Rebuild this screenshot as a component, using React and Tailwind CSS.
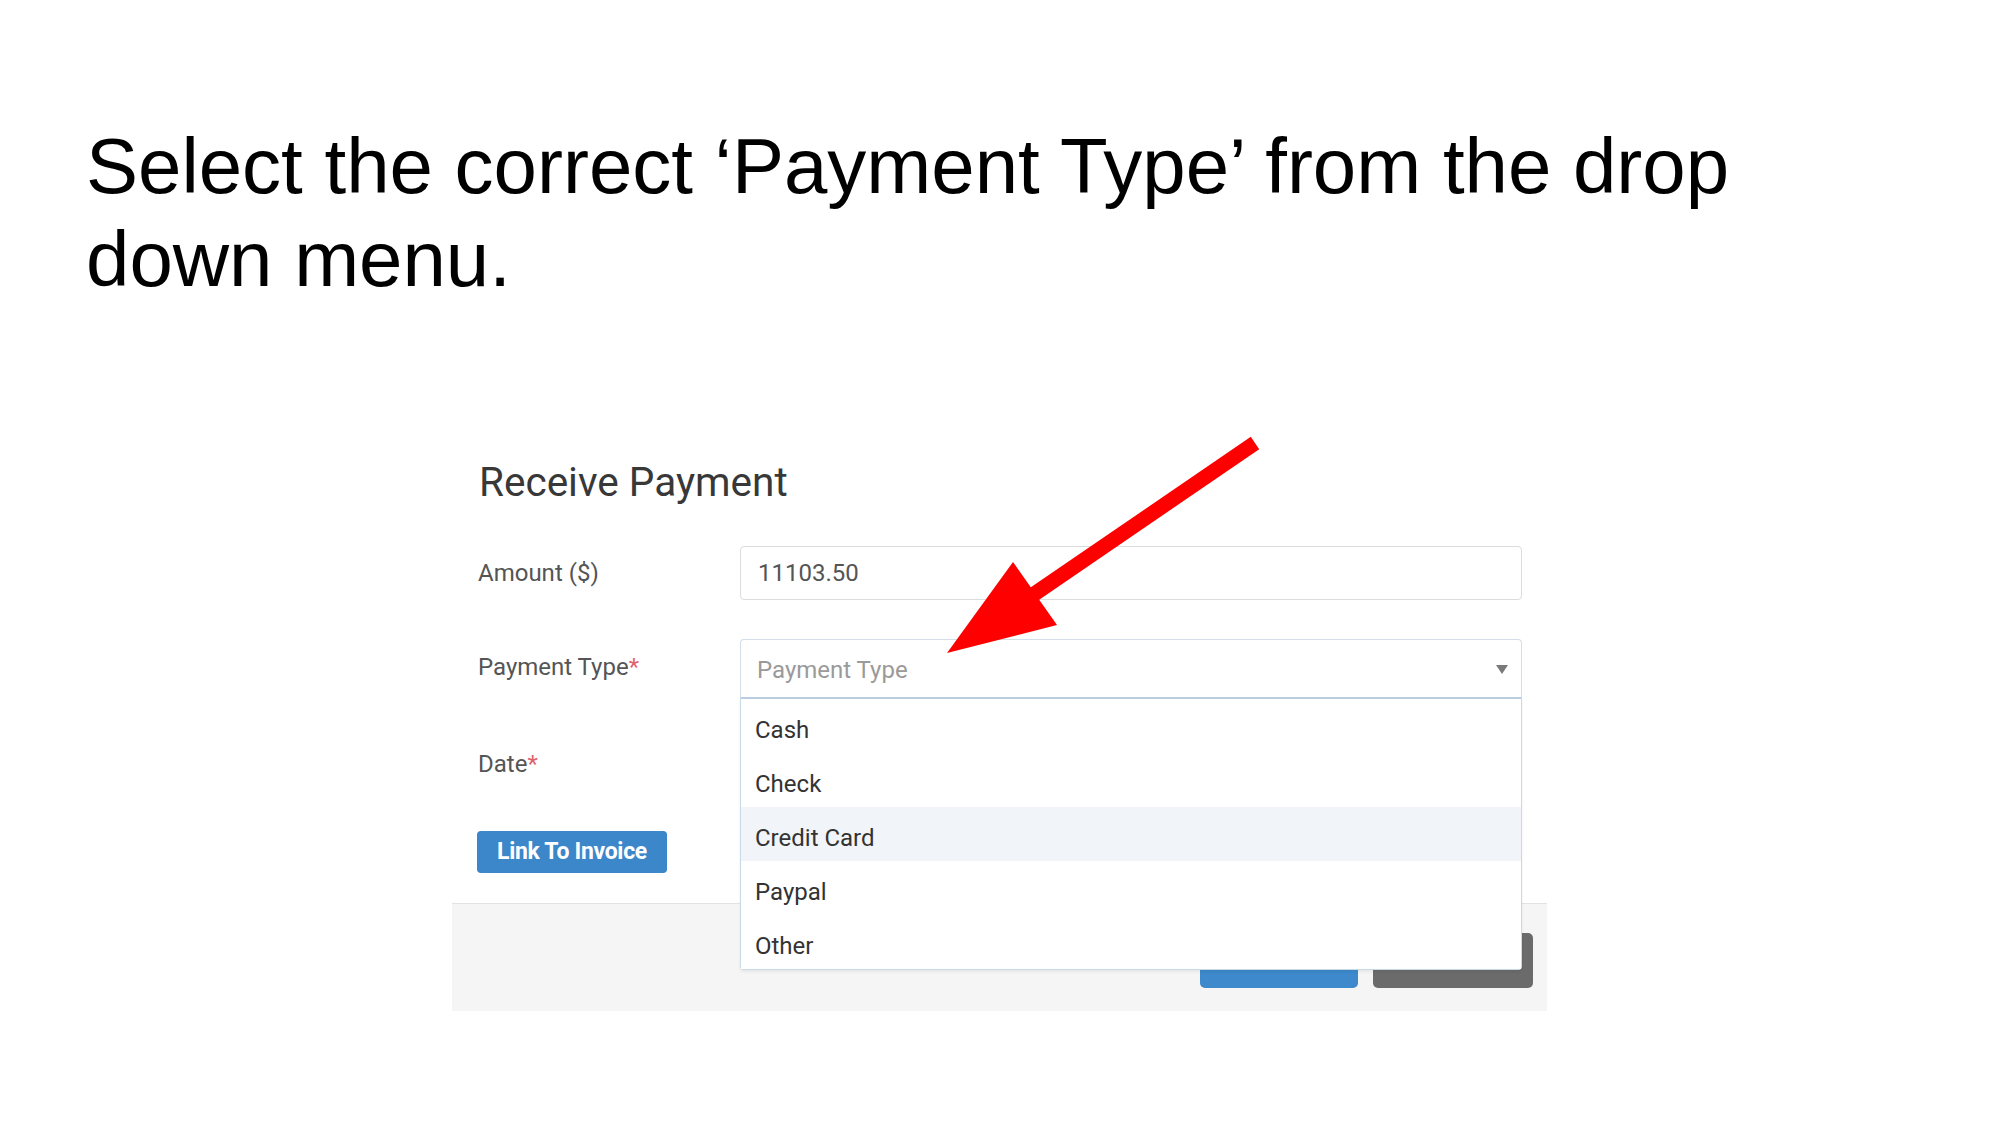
import React from "react";

const options = ["Cash", "Check", "Credit Card", "Paypal", "Other"];

export default function App() {
  return (
    <div className="relative w-[2000px] h-[1125px] bg-white overflow-hidden">
      <h1 className="pl-[86px] pt-[120px] text-[78px] leading-[93px] text-black font-normal font-['Liberation_Sans',Arial,sans-serif]">
        Select the correct ‘Payment Type’ from the drop
        <br />
        down menu.
      </h1>

      <div className="ml-[452px] mt-[124px] w-[1095px] bg-white pt-[30px] font-['Roboto',sans-serif]">
        <div className="pl-[27px] text-[40.5px] leading-[44px] text-[#383838]">Receive Payment</div>

        <div className="mt-[42px] pl-[26px] flex items-center">
          <div className="w-[262px] text-[24px] leading-[28px] text-[#555]">Amount ($)</div>
          <div className="w-[782px] h-[54px] border border-[#dcdcdc] rounded-[4px] pl-[17px] flex items-center text-[24px] leading-[28px] text-[#555]">
            11103.50
          </div>
        </div>

        <div className="mt-[39px] pl-[26px] flex items-center">
          <div className="w-[262px] text-[24px] leading-[28px] text-[#555] -mt-[4px]">
            Payment Type<span className="text-[#e0626b]">*</span>
          </div>
          <div className="relative w-[782px]">
            <div className="h-[60px] border border-[#d3dee8] border-b-2 border-b-[#b9cfe1] rounded-t-[4px] pl-[16px] pr-[13px] flex items-center justify-between text-[24px] leading-[28px] text-[#9a9a9a]">
              <span className="mt-[2px]">Payment Type</span>
              <svg width="12" height="9" viewBox="0 0 12 9" className="mt-[2px]">
                <polygon points="0,0 12,0 6,9" fill="#7a7a7a" />
              </svg>
            </div>
            <div className="absolute left-0 top-full w-[782px] bg-white border border-t-0 border-[#c8d9e7] rounded-b-[4px] shadow-[0_2px_3px_rgba(0,0,0,0.06)] z-10">
              {options.map((o, i) => (
                <div
                  key={o}
                  className={
                    "h-[54px] pl-[14px] pt-[7px] flex items-center text-[24px] leading-[28px] text-[#333] " +
                    (i === 2 ? "bg-[#f1f5f9]" : "bg-white")
                  }
                >
                  {o}
                </div>
              ))}
            </div>
          </div>
        </div>

        <div className="mt-[51px] pl-[26px] text-[24px] leading-[28px] text-[#555]">
          Date<span className="text-[#e0626b]">*</span>
        </div>

        <div className="mt-[53px] pl-[25px]">
          <div className="w-[190px] h-[42px] bg-[#3b87c9] rounded-[4px] flex items-center justify-center text-white font-bold text-[23px] leading-[26px] tracking-[-0.3px]">
            Link To Invoice
          </div>
        </div>

        <div className="mt-[30px] h-[108px] border-t border-[#e2e2e2] bg-[#f5f5f5] flex justify-end items-start pt-[29px] pr-[14px] gap-[15px]">
          <div className="w-[158px] h-[55px] bg-[#3d89cc] rounded-[5px]" />
          <div className="w-[160px] h-[55px] bg-[#6b6b6b] rounded-[5px]" />
        </div>
      </div>

      <svg className="absolute inset-0 pointer-events-none z-20" width="2000" height="1125" viewBox="0 0 2000 1125">
        <polygon
          points="1250.8,436.8 1259.2,449.2 1039.2,599.7 1057,625 947,653 1013,562 1030.8,587.3"
          fill="#ff0000"
        />
      </svg>
    </div>
  );
}
